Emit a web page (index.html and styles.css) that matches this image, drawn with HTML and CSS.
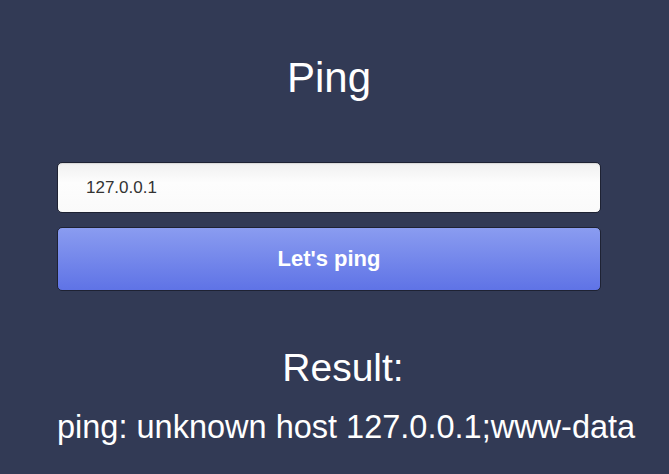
FILE: index.html
```html
<!DOCTYPE html>
<html>
<head>
<meta charset="utf-8">
<link rel="stylesheet" href="styles.css">
</head>
<body>
<main class="page">
  <h1 class="title">Ping</h1>
  <form class="ping-form">
    <input class="host-input" type="text" value="127.0.0.1">
    <button class="ping-btn" type="button">Let's ping</button>
  </form>
  <section class="result">
    <h2 class="result-title">Result:</h2>
    <p class="result-text">ping: unknown host 127.0.0.1;www-data</p>
  </section>
</main>
</body>
</html>
```
FILE: styles.css
```css
html, body {
  margin: 0;
  padding: 0;
  background: #323a55;
  height: 100%;
}
body {
  font-family: "Liberation Sans", Arial, sans-serif;
  color: #ffffff;
}
.page {
  width: 544px;
  margin-left: 57px;
  padding-top: 51px;
  display: flex;
  flex-direction: column;
}
.title {
  margin: 0;
  font-size: 42px;
  font-weight: normal;
  text-align: center;
  line-height: 54px;
}
.ping-form {
  margin-top: 57px;
  display: flex;
  flex-direction: column;
  gap: 14px;
}
.host-input {
  box-sizing: border-box;
  height: 51px;
  width: 100%;
  border: 1px solid #1e2233;
  border-radius: 5px;
  background: linear-gradient(#f0f0f0, #fdfdfd 40%, #fafafa);
  box-shadow: inset 0 2px 1px -1px #d8d8d8;
  padding: 0 28px;
  font-family: "Liberation Sans", Arial, sans-serif;
  font-size: 17px;
  color: #333;
  outline: none;
}
.ping-btn {
  box-sizing: border-box;
  height: 64px;
  width: 100%;
  border: 1px solid #1e2233;
  border-radius: 5px;
  background: linear-gradient(#8a9cf0, #5f73e6);
  color: #fff;
  font-family: "Liberation Sans", Arial, sans-serif;
  font-size: 22px;
  font-weight: bold;
}
.result {
  margin-top: 54px;
}
.result-title {
  margin: 0;
  font-size: 39px;
  font-weight: normal;
  text-align: center;
  line-height: 46px;
  padding-left: 28px;
}
.result-text {
  margin: 16px 0 0;
  font-size: 32.5px;
  line-height: 40px;
  text-align: center;
  white-space: nowrap;
}
```
